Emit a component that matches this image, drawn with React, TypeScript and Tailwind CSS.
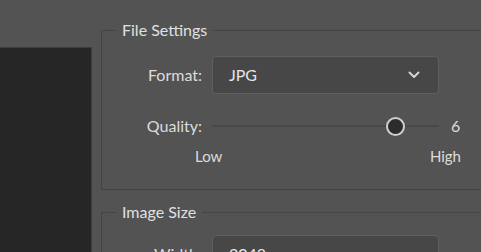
export default function App() {
  return (
    <div
      className="flex h-[252px] w-[481px] overflow-hidden bg-[#535353] text-[16px] text-[#dcdcdc]"
      style={{ fontFamily: "Lato, 'Open Sans', sans-serif" }}
    >
      {/* Preview panel */}
      <div className="mt-[47px] h-[210px] w-[92px] shrink-0 border-t border-r border-[#3d3d3d] bg-[#262626]" />

      {/* Settings column */}
      <div className="ml-[9px] flex w-[420px] shrink-0 flex-col">
        {/* File Settings */}
        <fieldset className="mt-[20px] h-[170px] shrink-0 border border-[#444444]">
          <legend className="ml-[14px] px-[6px] leading-[20px] text-[#e0e0e0]">File Settings</legend>

          <div className="mt-[16px] flex items-center">
            <span className="w-[100px] text-right">Format:</span>
            <button className="ml-[10px] flex h-[38px] w-[227px] items-center justify-between rounded-[4px] border border-[#5f5f5f] bg-[#474747] pl-[16px] pr-[18px] text-[#e6e6e6]">
              <span>JPG</span>
              <svg width="12" height="8" viewBox="0 0 12 8" fill="none">
                <polyline points="1.5,1.5 6,6 10.5,1.5" stroke="#d4d4d4" strokeWidth="2" strokeLinecap="round" strokeLinejoin="round" />
              </svg>
            </button>
          </div>

          <div className="mt-[22px] flex h-[20px] items-center">
            <span className="w-[100px] text-right">Quality:</span>
            <div className="ml-[10px] flex h-[20px] w-[227px] items-center">
              <div className="h-[2px] w-[174px] bg-[#484848]" />
              <div className="h-[19px] w-[19px] shrink-0 rounded-full border-2 border-[#cfcfcf] bg-[#2c2c2c]" />
              <div className="h-[2px] flex-1 bg-[#484848]" />
            </div>
            <span className="ml-[12px]">6</span>
          </div>

          <div className="mt-[10px] flex w-[359px] justify-between pl-[93px] text-[15px] leading-[20px]">
            <span>Low</span>
            <span>High</span>
          </div>
        </fieldset>

        {/* Image Size */}
        <fieldset className="mt-[12px] h-[80px] shrink-0 border border-[#444444]">
          <legend className="ml-[14px] px-[6px] leading-[20px] text-[#e0e0e0]">Image Size</legend>
          <div className="mt-[13px] flex items-center">
            <span className="w-[100px] text-right">Width:</span>
            <div className="ml-[10px] flex h-[38px] w-[227px] items-center rounded-[4px] border border-[#5f5f5f] bg-[#474747] pl-[16px] text-[#e6e6e6]">
              2048
            </div>
          </div>
        </fieldset>
      </div>
    </div>
  );
}
